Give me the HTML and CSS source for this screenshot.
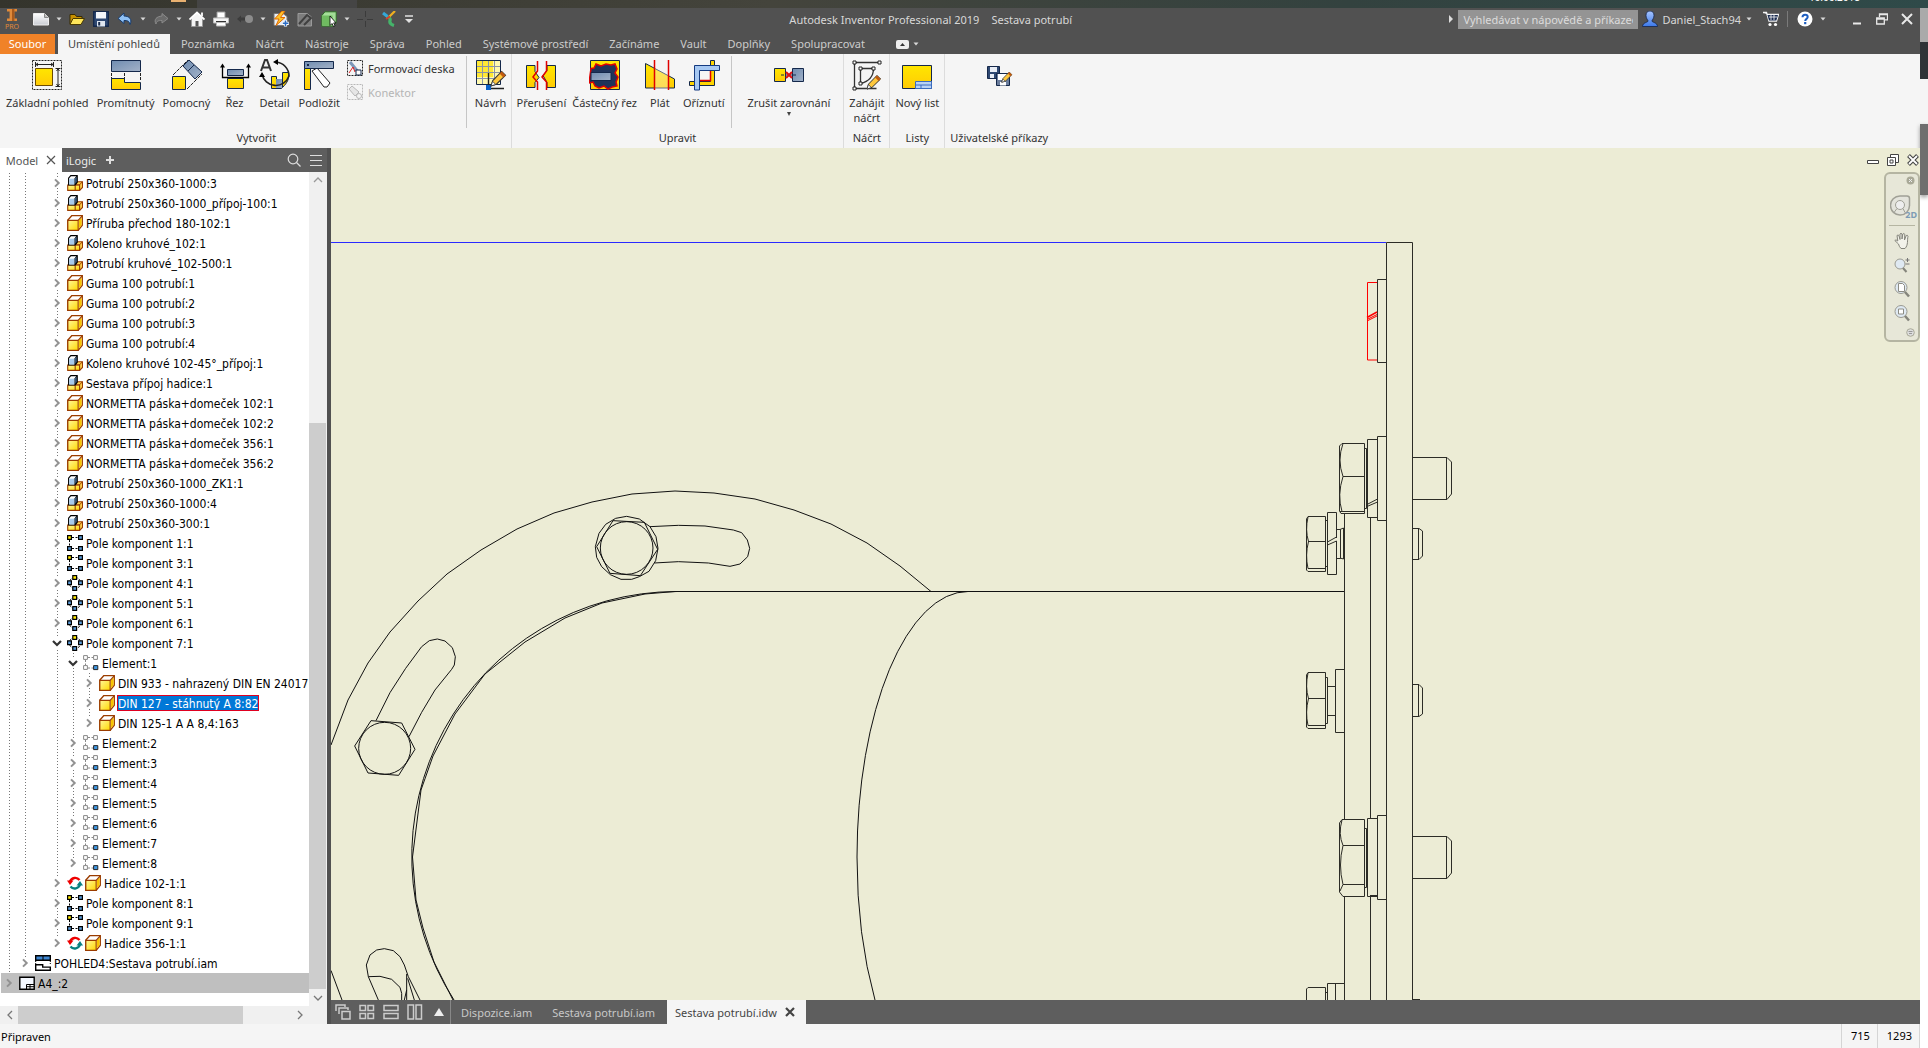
FILE: index.html
```html
<!DOCTYPE html>
<html lang="cs">
<head>
<meta charset="utf-8">
<title>Autodesk Inventor Professional 2019 – Sestava potrubí</title>
<link rel="stylesheet" href="styles.css">
</head>
<body>
<svg class="defs" aria-hidden="true">
  <defs>
    <linearGradient id="gold" x1="0" y1="0" x2="0" y2="1"><stop offset="0" stop-color="#ffe600"/><stop offset="1" stop-color="#ffcb05"/></linearGradient>
    <linearGradient id="steel" x1="0" y1="0" x2="1" y2="1"><stop offset="0" stop-color="#6f8cb0"/><stop offset="1" stop-color="#a3b2c8"/></linearGradient>
    <linearGradient id="paper" x1="0" y1="0" x2="0" y2="1"><stop offset="0" stop-color="#ffffff"/><stop offset="1" stop-color="#c9ccd3"/></linearGradient>
    <linearGradient id="partface" x1="0" y1="0" x2="1" y2="1"><stop offset="0" stop-color="#fff79a"/><stop offset="1" stop-color="#ffd800"/></linearGradient>
    <linearGradient id="user" x1="0" y1="0" x2="0" y2="1"><stop offset="0" stop-color="#a8c6ff"/><stop offset="1" stop-color="#3b78e8"/></linearGradient>
    <symbol id="part" viewBox="0 0 16 16"><path d="M.7 5.300 4.700.7h10.600v9.500l-4.100 5.100H.7z" fill="#fff" stroke="#9a3c00" stroke-width="1.300"/><path d="M.8 5.300h10.400v10H.8z" fill="url(#partface)" stroke="#9a3c00" stroke-width="1.200"/><path d="M11.800 5.500 14.700 2v7.900l-2.900 3.600z" fill="#f8c400"/><path d="m11.200 5.300 4-4.500" stroke="#9a3c00" stroke-width="1.200"/></symbol>
    <symbol id="asm" viewBox="0 0 16 16"><path d="M.7 10h7.500v5.400H.7zM8.200 10h4.400v5.400H8.200z" fill="url(#partface)" stroke="#9a3c00" stroke-width="1.100"/><path d="m8.200 9.800 2.300-3h5v5.700l-2.900 2.900V9.800z" fill="#ffd34d" stroke="#9a3c00" stroke-width="1.100"/><path d="m12.600 9.800 2.600-2.800" stroke="#9a3c00"/><path d="M1.600 3.200 3.800.6h6.400v6.600L8 10H1.600z" fill="#fff" stroke="#000" stroke-width="1.100"/><path d="M2.200 3.700h5.200v5.700H2.200z" fill="#a9cbec"/><path d="M7.900 9.600V3.400l2-2.500v6z" fill="#4d7cb0" stroke="#000" stroke-width=".8"/></symbol>
    <symbol id="rect" viewBox="0 0 16 16"><path d="M5 2.500h7M2.500 5v7M5 13.500h7" stroke="#000" stroke-dasharray="2 1.500"/><path d="M.6.6h3.800v3.800H.6z" fill="#ffe800" stroke="#000" stroke-width="1.200"/><path d="M11.600.6h3.800v3.800h-3.800zM.6 11.600h3.800v3.800H.6zM11.600 11.600h3.800v3.800h-3.800z" fill="#5b9bd8" stroke="#000" stroke-width="1.200"/></symbol>
    <symbol id="circ" viewBox="0 0 16 16"><circle cx="8" cy="8" r="5.600" fill="none" stroke="#000" stroke-dasharray="2 1.300"/><path d="M5.800.6h3.800v3.800H5.800z" fill="#ffe800" stroke="#000" stroke-width="1.200"/><path d="M.6 5.800h3.800v3.800H.6zM11.600 5.800h3.800v3.800h-3.800zM5.800 11.600h3.800v3.800H5.800z" fill="#5b9bd8" stroke="#000" stroke-width="1.200"/></symbol>
    <symbol id="elem" viewBox="0 0 16 16"><path d="M5 2.500h6M2.500 5v6M5 13h6" stroke="#888" stroke-dasharray="2 1.500"/><path d="M.6.6h3.800v3.800H.6zM10.600.6h3.800v3.800h-3.800zM.6 10.600h3.800v3.800H.6z" fill="#fff" stroke="#888"/><path d="M10.600 10.600h4.200v4h-4.200z" fill="#3f95e0" stroke="#222"/></symbol>
    <symbol id="flex" viewBox="0 0 16 16"><path d="M3 6.500A5.500 5.500 0 0 1 12.500 5" fill="none" stroke="#e00" stroke-width="2.400"/><path d="M0 5.500h6.500L3 10z" fill="#e00"/><path d="M13 9.500A5.500 5.500 0 0 1 3.500 11.500" fill="none" stroke="#088080" stroke-width="2.400"/><path d="M9.500 10.500H16L13 6z" fill="#088080"/></symbol>
    <symbol id="view" viewBox="0 0 16 16"><path d="M.7.7h14.600v4.600H.7z" fill="#3f86d0" stroke="#000" stroke-width="1.400"/><path d="M8 1v4" stroke="#000"/><path d="M.7 6v4M15.300 6v4" stroke="#000" stroke-dasharray="1 1"/><path d="M.7 9.700h7v2.400h7.600v3.200H.7z" fill="#fff" stroke="#000" stroke-width="1.400"/></symbol>
    <symbol id="sheet" viewBox="0 0 16 16"><path d="M.8 2.300h14.400v11.900H.8z" fill="#f4f8ff" stroke="#000" stroke-width="1.400"/><path d="M7.500 9.500h7.500v4.500H7.500zM7.500 11.700h7.500M11 9.500v4.500" fill="#fff" stroke="#000"/></symbol>
    <symbol id="chev" viewBox="0 3 16 10"><path d="m6 4.400 3.700 3.600L6 11.600" fill="none" stroke="#929292" stroke-width="2"/></symbol>
    <symbol id="chevd" viewBox="0 3 16 10"><path d="m4 6 4 4 4-4" fill="none" stroke="#333" stroke-width="2.200"/></symbol>
    <symbol id="drop" viewBox="0 0 8 8"><path d="M1.500 2.500h5L4 5.500z" fill="#d8d8d8"/></symbol>
    <symbol id="pencil" viewBox="0 0 16 16"><path d="m1 15 1.600-5L11 1.400 14.600 5 6 13.400z" fill="#ffc83c" stroke="#333" stroke-width="1"/><path d="M11 1.400 14.600 5l-2 2L9 3.400z" fill="#c05a10"/><path d="m1 15 1.400-4.400 3 3z" fill="#fff" stroke="#333" stroke-width=".8"/></symbol>
  </defs>
</svg>

<div class="desktop"><i class="task-mark"></i><i class="task-pane"></i><time class="clock">10.06.2018</time></div>
<div class="screen">
<div class="app">
  <header class="titlebar">
    <div class="qat">
      <button class="logo" aria-label="Inventor"><svg width="16" height="18" viewBox="0 0 16 18"><path d="M3 1h10v2.600h-2.600v7H13V13H3v-2.400h2.600v-7H3z" fill="#e08a3a"/><path d="M8 1h2.400v12H8z" fill="#a85a1c"/></svg><span>PRO</span></button>
      <button aria-label="Nový"><svg width="16" height="16"><path d="M.5 2.500h11l4 4v7.500H.5z" fill="url(#paper)" stroke="#eee"/><path d="M11.500 2.500v4h4" fill="#bbb" stroke="#888"/></svg></button>
      <button class="dd" aria-label="Možnosti nového"><svg width="8" height="8"><use href="#drop"/></svg></button>
      <button aria-label="Otevřít"><svg width="16" height="16"><path d="M1 13V3.500h5l1.500 2H13V8" fill="#c79000" stroke="#3a2c00"/><path d="M1 13.500 4 7.500h11.500l-3.500 6z" fill="#ffe65a" stroke="#4a3a00"/></svg></button>
      <button aria-label="Uložit"><svg width="16" height="16"><path d="M.7.7h14.600v14.600H.7z" fill="#2e4872" stroke="#15284a" stroke-width="1.400"/><path d="M3 1h10v6.500H3z" fill="#f4f6fa"/><path d="M4 10h8v5.500H4z" fill="#dfe6f0"/><path d="M5.200 11h2v3.500h-2z" fill="#15284a"/></svg></button>
      <button aria-label="Zpět"><svg width="16" height="16"><path d="M7 2 1 7.500l6 5v-3c4-.2 5.500 1 6 4 2.500-5-.5-8.500-6-8.500z" fill="#8fc1f5" stroke="#163a6c"/></svg></button>
      <button class="dd" aria-label="Historie zpět"><svg width="8" height="8"><use href="#drop"/></svg></button>
      <button aria-label="Znovu"><svg width="16" height="16"><path d="M9 2.500 15 7.500 9 12V9.500C5 9.300 3.500 10.500 3 13 .5 8.500 3.500 5.500 9 5z" fill="#6b6b6b" stroke="#8a8a8a"/></svg></button>
      <button class="dd" aria-label="Historie znovu"><svg width="8" height="8"><use href="#drop"/></svg></button>
      <button aria-label="Domů"><svg width="16" height="16"><path d="M2.500 7v8.500h11V7L8 2z" fill="#f4f4f4" stroke="#999"/><path d="M.5 8.500 8 1.500l7.500 7" fill="none" stroke="#fff" stroke-width="1.800"/><path d="M6.500 10h3v5.500h-3z" fill="#555"/><path d="M12 1.500h2V5h-2z" fill="#eee"/></svg></button>
      <button aria-label="Tisk"><svg width="16" height="16"><path d="M4 1h8v6H4z" fill="#fff" stroke="#999"/><path d="M.5 7h15v5H.5z" fill="#f4f4f4" stroke="#bbb"/><path d="M3 10h10v1.500H3z" fill="#333"/><path d="M3.500 11.500h9V15h-9z" fill="#fff" stroke="#bbb"/></svg></button>
      <button aria-label="Návrat"><svg width="16" height="16"><path d="m0 8 4-3.500v2h4v3H4v2z" fill="#3c3c3c"/><circle cx="12" cy="8" r="4" fill="#8c8c8c"/></svg></button>
      <button class="dd" aria-label="Možnosti návratu"><svg width="8" height="8"><use href="#drop"/></svg></button>
      <button aria-label="Aktualizovat"><svg width="16" height="16"><path d="M1 2.500h9l4 3v9H1z" fill="#e9eef4" stroke="#777"/><path d="M9 0 1.500 8H6l-3 6.500L12 6.500H7.500L12 0z" fill="#ffc42a" stroke="#e06a00"/><path d="M12.500 9v6.500M9.300 12.300h6.500" stroke="#fff" stroke-width="3.200"/><path d="M12.500 9.500V15M9.800 12.300h5.500" stroke="#2b6cc4" stroke-width="1.600"/></svg></button>
      <button aria-label="Odložit"><svg width="16" height="16"><path d="M1 2.500h9l4.500 3.500v9H1z" fill="#7d7d7d" stroke="#9a9a9a"/><path d="m2 13 8-9 4 3-7 7" fill="none" stroke="#404040" stroke-width="2"/></svg></button>
      <button aria-label="Vybrat"><svg width="16" height="16"><path d="M.8 4.500 4 .8h11.200v10.700L12 15.200H.8z" fill="#a4dd98" stroke="#2f6b28"/><path d="M1.300 4.500h10.200v10.200H1.300z" fill="#6fbb60"/><path d="M9 5v9.500l2-2 1.500 3 1.500-.8-1.300-2.800H15z" fill="#fff" stroke="#000" stroke-width=".8"/></svg></button>
      <button class="dd" aria-label="Filtr výběru"><svg width="8" height="8"><use href="#drop"/></svg></button>
      <button aria-label="Středový kříž"><svg width="16" height="16"><path d="M8.500 0v6M8.500 10v6M0 8.500h6M10 8.500h6" stroke="#3b3b3b"/></svg></button>
      <button aria-label="Vzhled"><svg width="16" height="16"><path d="M5 6.500q5-.5 4 3t4 5" fill="none" stroke="#45b36a" stroke-width="3.200"/><path d="m2 2 4.500 3.500" stroke="#35a8d8" stroke-width="3"/><path d="m14 0-6 6" stroke="#f0b020" stroke-width="2.200"/><path d="m5 8 4-2.500" stroke="#d83a2a" stroke-width="2"/></svg></button>
      <button class="dd" aria-label="Přizpůsobit"><svg width="10" height="10"><path d="M1 2h8" stroke="#e0e0e0" stroke-width="1.500"/><path d="M1 5h8L5 9z" fill="#e0e0e0"/></svg></button>
    </div>
    <div class="title"><span>Autodesk Inventor Professional 2019</span><span>Sestava potrubí</span></div>
    <div class="account">
      <svg width="6" height="10"><path d="M1 1v8l4-4z" fill="#ddd"/></svg>
      <input class="search" type="text" aria-label="Vyhledávání" placeholder="Vyhledávat v nápovědě a příkazech">
      <button class="user"><svg width="16" height="16"><path d="M8 0c3 0 4 2.200 4 4.500S10.500 9 9.800 10c.5 1.500 5.700 1.500 5.700 5.500H.5C.5 11.500 5.700 11.500 6.200 10 5.500 9 4 7 4 4.500S5 0 8 0z" fill="url(#user)" stroke="#14244a" stroke-width=".8"/></svg>Daniel_Stach94<svg width="8" height="8"><use href="#drop"/></svg></button>
      <button class="cart" aria-label="Obchod"><svg width="16" height="16"><path d="M0 1.500h3.500L6 10h7.500l2-6.500H4.500" fill="#dfe6f2" stroke="#f4f4f4" stroke-width="1.300"/><path d="M4.500 4h10.500l-1.700 5.500H6z" fill="#1b2c50"/><path d="M6 6h8M8 4v5M11 4v5" stroke="#fff" stroke-width=".8"/><circle cx="7" cy="13.500" r="1.600" fill="#fff"/><circle cx="12.500" cy="13.500" r="1.600" fill="#fff"/></svg></button>
      <button class="help" aria-label="Nápověda"><svg width="16" height="16"><circle cx="8" cy="8" r="7.500" fill="#fff"/><path d="M5.500 6.200c0-3.400 5.200-3.200 5.200-.2 0 1.900-2.500 1.900-2.500 4" fill="none" stroke="#1f5fc0" stroke-width="2"/><path d="M7.100 11h2.200v2.200H7.100z" fill="#1f5fc0"/></svg><svg width="8" height="8"><use href="#drop"/></svg></button>
      <div class="winbtns">
        <button aria-label="Minimalizovat"><svg width="12" height="12"><path d="M2 10.500h8" stroke="#e8e8e8" stroke-width="2"/></svg></button>
        <button aria-label="Obnovit"><svg width="12" height="12"><path d="M3.500 4V.8h8v6h-3M3.500 1.500h8" fill="none" stroke="#e8e8e8" stroke-width="1.300"/><path d="M.7 5h7.600v6H.7zM.7 6h7.600" fill="none" stroke="#e8e8e8" stroke-width="1.300"/></svg></button>
        <button aria-label="Zavřít"><svg width="12" height="12"><path d="m1 1 10 10M11 1 1 11" stroke="#e8e8e8" stroke-width="2"/></svg></button>
      </div>
    </div>
  </header>

  <nav class="tabs">
    <button class="file">Soubor</button>
    <button class="active">Umístění pohledů</button>
    <button>Poznámka</button><button>Náčrt</button><button>Nástroje</button><button>Správa</button><button>Pohled</button><button>Systémové prostředí</button><button>Začínáme</button><button>Vault</button><button>Doplňky</button><button>Spolupracovat</button>
    <button class="collapse" aria-label="Sbalit pás karet"><svg width="13" height="9"><rect width="13" height="9" rx="2" fill="#eee"/><path d="M4 6h5L6.500 3z" fill="#333"/></svg><svg width="8" height="8"><use href="#drop"/></svg></button>
  </nav>

  <section class="ribbon">
    <div class="panel create">
      <div class="tools">
        <button><svg width="32" height="32"><path d="M1.500 1.500h29v29h-29z" fill="none" stroke="#222" stroke-dasharray="2 1"/><path d="M4.500 9.500h17v17h-17z" fill="url(#gold)" stroke="#6b4a00"/><path d="M5 5.500h17M4.500 3v5M22.500 3v5M7 4 5 5.500 7 7M20 4l2 1.500L20 7M27 10v17M24.500 9.500h5M24.500 27.500h5M25.500 12l1.500-2 1.500 2M25.500 25l1.500 2 1.500-2" fill="none" stroke="#222"/></svg>Základní pohled</button>
        <button><svg width="32" height="32"><path d="M1.500 1.500h29v11h-29z" fill="url(#steel)" stroke="#14284b"/><path d="M1.500 14v6M14.500 14v8M30.500 14v8" stroke="#222" stroke-dasharray="3 1"/><path d="M1.500 19.500h13v4h16v7h-29z" fill="url(#gold)" stroke="#14284b"/></svg>Promítnutý</button>
        <button><svg width="32" height="32"><path d="M2 16 17 1M16 30l15-15" stroke="#222" stroke-dasharray="4 1"/><path d="m12 7 6-6 13 12-7 7z" fill="url(#steel)" stroke="#14284b"/><path d="m17 12 6-6" stroke="#14284b"/><path d="M1.500 17.500h13v13h-13z" fill="url(#gold)" stroke="#14284b"/></svg>Pomocný</button>
        <button><svg width="32" height="32"><path d="M8.500 10.500h16v6h-16z" fill="url(#steel)" stroke="#14284b"/><path d="M8.500 19.500h16v10h-16z" fill="url(#gold)" stroke="#14284b"/><path d="M3.500 7v11.500h26V7" fill="none" stroke="#000" stroke-width="1.300"/><path d="m1 8.500 2.500-4L6 8.500zM27 8.500l2.500-4 2.500 4z"/></svg>Řez</button>
        <button><svg width="32" height="32"><path d="M12.500 17.500h5v3h5v9h-10z" fill="url(#gold)" stroke="#14284b"/><path d="M17 20h7v9h-7z" fill="url(#steel)"/><path d="M23.500 13.500h6c1 6-1 10-6 15z" fill="url(#gold)" stroke="#14284b"/><path d="M3 15a14 14 0 0 0 27 2A14 14 0 0 0 17 3" fill="none" stroke="#222" stroke-width="1.600"/><path d="m14 3 5-3v6zM0 18l3-5 3 5z"/><path d="m2 12 4-11h2l4 11M4 8.500h6" fill="none" stroke="#333" stroke-width="2"/></svg>Detail</button>
        <button><svg width="32" height="32"><path d="m9 12 5-3 13 15-3 4h-3z" fill="#fff" stroke="#222"/><path d="M1.500 9.500h6v21h-6z" fill="url(#gold)" stroke="#14284b"/><path d="M1.500 2.500h29v7h-29z" fill="url(#steel)" stroke="#14284b"/><path d="M4 5h2v2H4z" fill="#14284b"/></svg>Podložit</button>
        <div class="small">
          <button><svg width="16" height="16"><path d="M.5.5h15v15H.5z" fill="none" stroke="#222" stroke-dasharray="2 1"/><path d="m3 2 9 11" stroke="#7d97b8" stroke-width="3"/><path d="m2 13 4-6 2 5" fill="none" stroke="#d22"/><path d="M9 10h5v5H9z" fill="#fff" stroke="#14284b"/></svg>Formovací deska</button>
          <button disabled><svg width="16" height="16"><path d="M.5.5h15v15H.5z" fill="none" stroke="#b8b8b8" stroke-dasharray="2 1"/><path d="m2 5 3-3 7 6-4 4z" fill="#e6e6e6" stroke="#b8b8b8"/><circle cx="12" cy="12" r="2.500" fill="#f5f5f5" stroke="#b8b8b8"/></svg>Konektor</button>
        </div>
        <i class="rule"></i>
        <button><svg width="32" height="32"><path d="M1.500 1.500h24v24h-24z" fill="#fff9b0" stroke="#14284b"/><path d="M2 2h16v16H2z" fill="#ffe835"/><path d="M2 7.500h23M2 13.500h23M2 19.500h23M7.500 2v23M13.500 2v23M19.500 2v23" stroke="#8a94a6"/><path d="M13.500 14v13M15 29.500h14" stroke="#222" stroke-width="1.400"/><path d="M11 26h5v5h-5z" fill="#0a62c8"/><svg x="15" y="11" width="17" height="17"><use href="#pencil"/></svg></svg>Návrh</button>
      </div>
      <h2>Vytvořit</h2>
    </div>
    <div class="panel">
      <div class="tools">
        <button><svg width="32" height="32"><path d="M1.500 6.500H10v6l4 6-4 5v5H1.500zM30.500 6.500H22v5l-4 5 4 7v5h8.500z" fill="url(#gold)" stroke="#14284b"/><path d="M12.500 2v10L8 18l4.500 5v8M21.500 2v10L17 18l4.500 5v8" fill="none" stroke="#e00000" stroke-width="1.500"/></svg>Přerušení</button>
        <button><svg width="32" height="32"><path d="M1.500 1.500h29v29h-29z" fill="url(#gold)" stroke="#14284b"/><path d="M2 9.500 5 9l2-4 5 2 5-2 5 1 4-1 2 5-2 4 3 4-2 5 1 4-5 1-4 2-4-3-5 2-4-2-2-4-4 1z" fill="#1f3359" stroke="#e00000" stroke-width="1.500"/><path d="M2 13.500h20v8H2z" fill="url(#steel)" stroke="#14284b"/></svg>Částečný řez</button>
        <button><svg width="32" height="32"><path d="M1.500 4.500 30.500 20v9h-29z" fill="url(#gold)" stroke="#14284b"/><path d="M11 5h13v25H11z" fill="#f5f5f5" opacity=".35"/><path d="M10.500 1v30M24.500 1v30" stroke="#e00000" stroke-width="1.500"/></svg>Plát</button>
        <button><svg width="32" height="32"><path d="M22.500 1.500h4v25h-25v-4h21z" fill="#ffd500" stroke="#14284b"/><path d="M10 21.500h12.500V10" fill="none" stroke="#e00000" stroke-width="1.500"/><path d="M6.500 31V6.500h25v5h-20V31z" fill="#a6c8f2" stroke="#143a80"/></svg>Oříznutí</button>
        <i class="rule"></i>
        <button class="wide"><svg width="32" height="32"><path d="M1.500 9.500h11v13h-11z" fill="url(#gold)" stroke="#14284b"/><path d="M19.500 9.500h11v13h-11z" fill="url(#steel)" stroke="#14284b"/><path d="M8 16h16" stroke="#14284b" stroke-dasharray="3 1"/><path d="m13 13 6 6M19 13l-6 6" stroke="#d11" stroke-width="2"/></svg>Zrušit zarovnání<svg width="8" height="8"><path d="M2 2h4L4 6z" fill="#444"/></svg></button>
      </div>
      <h2>Upravit</h2>
    </div>
    <div class="panel">
      <div class="tools">
        <button><svg width="32" height="32"><path d="M3.500 3.500h25M3.500 3.500v26h22M9.500 9.500h13c0 8-5 13-13 15z" fill="none" stroke="#333" stroke-width="1.300"/><path d="M2 2h3v3H2zM27 2h3v3h-3zM2 28h3v3H2zM8 8h3v3H8zM21 8h3v3h-3zM8 23h3v3H8z" fill="#fff" stroke="#222"/><svg x="15" y="15" width="16" height="16"><use href="#pencil"/></svg></svg>Zahájit<br>náčrt</button>
      </div>
      <h2>Náčrt</h2>
    </div>
    <div class="panel">
      <div class="tools">
        <button><svg width="32" height="32"><path d="M1.500 6.500h29v23h-29z" fill="url(#gold)" stroke="#14284b"/><path d="M14.500 22.500h16v7h-16zM14.500 26h16M20 26v3.500" fill="#b9d2f4" stroke="#3a6cc0"/></svg>Nový list</button>
      </div>
      <h2>Listy</h2>
    </div>
    <div class="panel last">
      <div class="tools">
        <button aria-label="Uložit kopii"><svg width="32" height="32"><path d="M4.500 7.500h12v12h-12z" fill="#2e4872" stroke="#15284a"/><path d="M7 8h7v5H7zM7 15h4v4H7z" fill="#e8edf5"/><path d="M13.500 14.500h13v12h-13z" fill="#6b7d9c" stroke="#15284a"/><path d="M15 15h9v6h-9zM17 23h6v3.500h-6z" fill="#fff"/><svg x="18" y="12" width="12" height="12"><use href="#pencil"/></svg></svg></button>
      </div>
      <h2>Uživatelské příkazy</h2>
    </div>
  </section>

  <div class="work">
    <aside class="browser">
      <div class="bhead">
        <button class="model">Model <svg width="10" height="10"><path d="m1 1 8 8M9 1 1 9" stroke="#555" stroke-width="1.200"/></svg></button>
        <button class="ilogic">iLogic</button>
        <button aria-label="Přidat"><svg width="10" height="10"><path d="M5 1v8M1 5h8" stroke="#ddd" stroke-width="2"/></svg></button>
        <span class="grow"></span>
        <button aria-label="Hledat"><svg width="14" height="14"><circle cx="6" cy="6" r="4.800" fill="none" stroke="#ddd" stroke-width="1.200"/><path d="m9.500 9.500 4 4" stroke="#ddd" stroke-width="1.200"/></svg></button>
        <button aria-label="Nabídka"><svg width="14" height="14"><path d="M1 2.500h12M1 7.500h12M1 12.500h12" stroke="#ddd" stroke-width="1.200"/></svg></button>
      </div>
      <div class="treewrap">
        <div class="treeview">
        <ul class="tree lined">
          <li><ul class="lined">
            <li><ul class="skip"><li><ul class="lined">
              <li><p><svg><use href="#chev"/></svg><svg><use href="#asm"/></svg><span>Potrubí 250x360-1000:3</span></p></li>
              <li><p><svg><use href="#chev"/></svg><svg><use href="#asm"/></svg><span>Potrubí 250x360-1000_přípoj-100:1</span></p></li>
              <li><p><svg><use href="#chev"/></svg><svg><use href="#part"/></svg><span>Příruba přechod 180-102:1</span></p></li>
              <li><p><svg><use href="#chev"/></svg><svg><use href="#asm"/></svg><span>Koleno kruhové_102:1</span></p></li>
              <li><p><svg><use href="#chev"/></svg><svg><use href="#asm"/></svg><span>Potrubí kruhové_102-500:1</span></p></li>
              <li><p><svg><use href="#chev"/></svg><svg><use href="#part"/></svg><span>Guma 100 potrubí:1</span></p></li>
              <li><p><svg><use href="#chev"/></svg><svg><use href="#part"/></svg><span>Guma 100 potrubí:2</span></p></li>
              <li><p><svg><use href="#chev"/></svg><svg><use href="#part"/></svg><span>Guma 100 potrubí:3</span></p></li>
              <li><p><svg><use href="#chev"/></svg><svg><use href="#part"/></svg><span>Guma 100 potrubí:4</span></p></li>
              <li><p><svg><use href="#chev"/></svg><svg><use href="#asm"/></svg><span>Koleno kruhové 102-45°_přípoj:1</span></p></li>
              <li><p><svg><use href="#chev"/></svg><svg><use href="#asm"/></svg><span>Sestava přípoj hadice:1</span></p></li>
              <li><p><svg><use href="#chev"/></svg><svg><use href="#part"/></svg><span>NORMETTA páska+domeček 102:1</span></p></li>
              <li><p><svg><use href="#chev"/></svg><svg><use href="#part"/></svg><span>NORMETTA páska+domeček 102:2</span></p></li>
              <li><p><svg><use href="#chev"/></svg><svg><use href="#part"/></svg><span>NORMETTA páska+domeček 356:1</span></p></li>
              <li><p><svg><use href="#chev"/></svg><svg><use href="#part"/></svg><span>NORMETTA páska+domeček 356:2</span></p></li>
              <li><p><svg><use href="#chev"/></svg><svg><use href="#asm"/></svg><span>Potrubí 250x360-1000_ZK1:1</span></p></li>
              <li><p><svg><use href="#chev"/></svg><svg><use href="#asm"/></svg><span>Potrubí 250x360-1000:4</span></p></li>
              <li><p><svg><use href="#chev"/></svg><svg><use href="#asm"/></svg><span>Potrubí 250x360-300:1</span></p></li>
              <li><p><svg><use href="#chev"/></svg><svg><use href="#rect"/></svg><span>Pole komponent 1:1</span></p></li>
              <li><p><svg><use href="#chev"/></svg><svg><use href="#rect"/></svg><span>Pole komponent 3:1</span></p></li>
              <li><p><svg><use href="#chev"/></svg><svg><use href="#circ"/></svg><span>Pole komponent 4:1</span></p></li>
              <li><p><svg><use href="#chev"/></svg><svg><use href="#circ"/></svg><span>Pole komponent 5:1</span></p></li>
              <li><p><svg><use href="#chev"/></svg><svg><use href="#circ"/></svg><span>Pole komponent 6:1</span></p></li>
              <li><p><svg><use href="#chevd"/></svg><svg><use href="#circ"/></svg><span>Pole komponent 7:1</span></p>
                <ul class="lined">
                  <li><p><svg><use href="#chevd"/></svg><svg><use href="#elem"/></svg><span>Element:1</span></p>
                    <ul class="lined">
                      <li><p><svg><use href="#chev"/></svg><svg><use href="#part"/></svg><span>DIN 933 - nahrazený DIN EN 24017</span></p></li>
                      <li><p class="picked"><svg><use href="#chev"/></svg><svg><use href="#part"/></svg><span>DIN 127 - stáhnutý A 8:82</span></p></li>
                      <li><p><svg><use href="#chev"/></svg><svg><use href="#part"/></svg><span>DIN 125-1 A A 8,4:163</span></p></li>
                    </ul>
                  </li>
                  <li><p><svg><use href="#chev"/></svg><svg><use href="#elem"/></svg><span>Element:2</span></p></li>
                  <li><p><svg><use href="#chev"/></svg><svg><use href="#elem"/></svg><span>Element:3</span></p></li>
                  <li><p><svg><use href="#chev"/></svg><svg><use href="#elem"/></svg><span>Element:4</span></p></li>
                  <li><p><svg><use href="#chev"/></svg><svg><use href="#elem"/></svg><span>Element:5</span></p></li>
                  <li><p><svg><use href="#chev"/></svg><svg><use href="#elem"/></svg><span>Element:6</span></p></li>
                  <li><p><svg><use href="#chev"/></svg><svg><use href="#elem"/></svg><span>Element:7</span></p></li>
                  <li><p><svg><use href="#chev"/></svg><svg><use href="#elem"/></svg><span>Element:8</span></p></li>
                </ul>
              </li>
              <li><p><svg><use href="#chev"/></svg><svg><use href="#flex"/></svg><svg><use href="#part"/></svg><span>Hadice 102-1:1</span></p></li>
              <li><p><svg><use href="#chev"/></svg><svg><use href="#rect"/></svg><span>Pole komponent 8:1</span></p></li>
              <li><p><svg><use href="#chev"/></svg><svg><use href="#rect"/></svg><span>Pole komponent 9:1</span></p></li>
              <li><p><svg><use href="#chev"/></svg><svg><use href="#flex"/></svg><svg><use href="#part"/></svg><span>Hadice 356-1:1</span></p></li>
            </ul></li></ul></li>
            <li><p><svg><use href="#chev"/></svg><svg><use href="#view"/></svg><span>POHLED4:Sestava potrubí.iam</span></p></li>
          </ul></li>
          <li><p class="current"><svg><use href="#chev"/></svg><svg><use href="#sheet"/></svg><span>A4_:2</span></p></li>
        </ul>
        </div>
        <div class="vbar"><svg width="17" height="17"><path d="m5 10 4-4 4 4" fill="none" stroke="#999" stroke-width="1.300"/></svg><i class="track"></i><i class="thumb"></i><svg width="17" height="17"><path d="m5 7 4 4 4-4" fill="none" stroke="#777" stroke-width="1.300"/></svg></div>
      </div>
      <div class="hbar"><svg width="17" height="17"><path d="M11 5 7 9l4 4" fill="none" stroke="#777" stroke-width="1.300"/></svg><i class="thumb"></i><i class="track"></i><svg width="17" height="17"><path d="m6 5 4 4-4 4" fill="none" stroke="#777" stroke-width="1.300"/></svg><i class="corner"></i></div>
    </aside>

    <main class="doc">
      <div class="canvas">
        <svg class="drawing" aria-label="Výkres sestavy potrubí">
          <g transform="translate(-331 -148)" fill="none" stroke="#111">
            <path d="M331 242.500H1386" stroke="#2a2aff"/>
            <path d="M331 745 348 700 368 663 390 632 418 601 447 574 481 550 517 529 554 513 592 502 632 494 675 491 714 493 755 499 794 510 831 524 867 543 900 566 931 591.500M331 970.500 342 1000"/>
            <path d="M454 1000A265 265 0 0 1 677 591.500M700 591.500H675L645 594 602 603 565 618 525 642 485 674 455 714 433 756 421 790 412.500 857 416 900 423 928 434 962 453 1000"/>
            <path d="M677 591.500H1344M968 591.500A111 265.500 0 0 0 857 857Q857 935 875 1000"/>
            <g transform="translate(325 470) scale(.33333)" stroke-width="3">
              <path d="M905 139 943 147 975 170 993 200 999 235 992 272 972 304 943 320 920 328H888L856 314 830 290 815 262 811 230 822 190 842 163 872 145Z"/>
              <circle cx="905" cy="234" r="79"/>
              <path d="M864 152 958 157 998 238 946 317 855 310 815 230Z"/>
              <path d="M975 170 1060 166 1140 168 1225 180 1250 188 1267 210 1274 235 1268 260 1245 282 1215 289 1150 279 1060 275 988 279"/>
              <circle cx="179" cy="835" r="78"/>
              <path d="M138 752 230 759 270 838 221 916 129 909 89 828Z"/>
              <path d="M153 752 195 668 242 595 290 530 313 512 337 507 360 513 382 533 391 560 388 585 380 598 330 660 290 727 252 800"/>
            </g>
            <g transform="translate(325 900) scale(.33333)" stroke-width="3">
              <path d="M160 300 130 230 124 195 135 165 155 150 178 146 205 152 225 170 238 195 250 230 285 300M130 230 165 229 200 238 225 262 230 280V300M245 222V300M248 235 268 300M245 270 238 300"/>
            </g>
            <g stroke="#2c2c26">
              <path d="M1386.500 1000V242.500H1412.500V1000M1344.500 513V820M1344.500 896V1000M1370.500 517V819M1370.500 897V1000"/>
              <path d="M1386 279.500H1377.500V362.500H1386M1386 436.500H1377.500V520.500H1386M1377 439.500H1367.500V517.500H1377M1367 504.500 1377.500 499M1367 506.500 1377.500 502"/>
              <path d="M1412 457.500H1447L1451.500 462V494L1447 499.500H1412M1446.500 458V499"/>
              <path d="M1364.500 443.500H1342L1339.500 446V511L1341 513.500H1364.500ZM1343 476.500H1364M1343 443.500Q1337 460 1343 476.500Q1337 495 1342 511.500M1340 511.500H1364M1364 448.500H1366.500V508.500H1364"/>
              <path d="M1325.500 516.500H1308L1306.500 519V570L1308 571.500H1325.500ZM1308 541.500H1325M1308 517Q1305 530 1308.500 541.500Q1305 555 1308 568.500H1325M1325 520.500H1327.500V566.500H1325"/>
              <path d="M1336.500 538V512.500H1327.500V574.500H1336.500V541M1327.500 542 1336.500 537M1327.500 545 1336.500 541M1336 529.500H1340.500V558.500H1336M1340 529.500 1343.500 528V559L1340 558"/>
              <path d="M1412 528.500H1419L1422.500 531V556L1419 559.500H1412M1418.500 528V559M1412 684.500H1419L1422.500 688V714L1419 716.500H1412M1418.500 685V716"/>
              <path d="M1325.500 672.500H1308L1306.500 675V727L1308 728.500H1325.500ZM1308 698.500H1325M1308 673Q1305 687 1308.500 698.500Q1305 712 1308 725.500H1325M1325 677.500H1327.500V723.500H1325M1327 686.500H1335M1327 715.500H1335M1344 669.500H1335.500V732.500H1344"/>
              <path d="M1364.500 819.500H1342L1339.500 823V892L1343 896.500H1364.500ZM1343 845.500H1364M1343 884.500H1364M1342 820Q1338 834 1343 845.500Q1338 865 1343 884.500L1340 891M1364 828.500H1366.500V887.500H1364"/>
              <path d="M1386 815.500H1377.500V899.500H1386M1377 818.500H1367.500V896.500H1377M1370 895.500H1377"/>
              <path d="M1412 836.500H1447L1451.500 841V873L1447 878.500H1412M1446.500 837V878"/>
              <path d="M1306.500 1000V989L1308 987.500H1325.500V1000M1327.500 1000V983.500H1344M1335.500 984V1000M1325 992.500H1327M1412 999.500H1420"/>
            </g>
            <path d="M1377 282.500H1367.500V360H1377M1367 319.500 1377 314.500M1367 321 1377 316" stroke="#f00"/>
            <path d="M1367 317.500 1377 312" stroke="#f00" stroke-width="1.500"/>
          </g>
        </svg>
        <div class="mdi">
          <button aria-label="Minimalizovat výkres"><svg width="12" height="12"><path d="M.5 6.500h11v3H.5z" fill="#fff" stroke="#444"/></svg></button>
          <button aria-label="Obnovit výkres"><svg width="12" height="12"><path d="M3.500 3V.5h8v8H9" fill="#fff" stroke="#444"/><path d="M.5 3.500h8v8h-8z" fill="#fff" stroke="#444"/><path d="M3 6h3v3H3z" fill="none" stroke="#444"/></svg></button>
          <button aria-label="Zavřít výkres"><svg width="12" height="12"><path d="m1.500 1.500 9 9M10.500 1.500l-9 9" stroke="#444" stroke-width="4"/><path d="m2 2 8 8M10 2l-8 8" stroke="#fff" stroke-width="1.800"/></svg></button>
        </div>
        <div class="navbar">
          <button class="edge" aria-label="Zavřít navigaci"><svg width="9" height="9"><circle cx="4.500" cy="4.500" r="4" fill="#a9a998"/><path d="m3 3 3 3M6 3 3 6" stroke="#eee"/></svg></button>
          <button class="wheel" aria-label="Navigační kolečko 2D"><svg width="24" height="26"><path d="M10 3h7q2.500 0 2.500 2.500V12A9.500 9.500 0 1 1 10 3z" fill="#e4e4dc" stroke="#a0a096" stroke-width="1.500"/><circle cx="10" cy="12" r="4.500" fill="#eee" stroke="#a0a096"/><path d="m7 15.500-3 4M13 15.500l2 4" stroke="#a0a096"/></svg><span>2D</span></button>
          <i></i>
          <button aria-label="Posun"><svg width="16" height="18"><path d="M4.500 12 .8 8.500q1-1.500 3 .5L3 3.500q1.200-1.200 2 .3L6 7.500V2q1-1.500 2 0v5l.8-5q1.200-1.200 2 .3L10.500 8l1.700-4.500q1.500-.8 1.800.8C13 8 14.500 13 11 16.500H7q-2-2-2.500-4.500z" fill="#f2f2ea" stroke="#85857c"/></svg></button>
          <button aria-label="Zoom"><svg width="16" height="18"><circle cx="6" cy="8" r="5" fill="#dfe9f2" stroke="#9a9a92"/><path d="m9 12 3.500 4" stroke="#85857c" stroke-width="2"/><path d="M11.500 4h4M13.500 2v4M11.500 8h4" stroke="#777"/></svg></button>
          <button aria-label="Zoom vše"><svg width="16" height="18"><circle cx="7" cy="7.500" r="6" fill="#dfe9f2" stroke="#9a9a92"/><path d="M4.500 3.500h4l2 2v6h-6z" fill="#fff" stroke="#8c8c84"/><path d="m11 12 4 4.500" stroke="#85857c" stroke-width="2.500"/></svg></button>
          <button aria-label="Zoom okno"><svg width="16" height="18"><circle cx="7" cy="7.500" r="6" fill="#dfe9f2" stroke="#9a9a92"/><path d="M4.500 5h5v5h-5z" fill="#fff" stroke="#8c8c84"/><path d="m11 12 4 4.500" stroke="#85857c" stroke-width="2.500"/></svg></button>
          <button class="edge low" aria-label="Možnosti navigace"><svg width="9" height="9"><circle cx="4.500" cy="4.500" r="3.800" fill="#ddd" stroke="#a9a998"/><path d="M2.500 3.500h4M3 5.500h3" stroke="#999"/></svg></button>
        </div>
      </div>
      <div class="doctabs">
        <button aria-label="Kaskáda"><svg width="16" height="16"><path d="M1 7V1h9v2M4 10V4h9v2M7 7.500h8v7.500H7z" fill="none" stroke="#ccc" stroke-width="1.500"/></svg></button>
        <button aria-label="Mřížka"><svg width="16" height="16"><path d="M1 1.500h5.500v5H1zM9 1.500h5.500v5H9zM1 9.500h5.500v5H1zM9 9.500h5.500v5H9z" fill="none" stroke="#ccc" stroke-width="1.500"/></svg></button>
        <button aria-label="Vodorovně"><svg width="16" height="16"><path d="M1 1.500h14v5H1zM1 9.500h14v5H1z" fill="none" stroke="#ccc" stroke-width="1.500"/></svg></button>
        <button aria-label="Svisle"><svg width="16" height="16"><path d="M1 1h5.500v14H1zM9 1h5.500v14H9z" fill="none" stroke="#ccc" stroke-width="1.500"/></svg></button>
        <button class="up" aria-label="Seznam dokumentů"><svg width="12" height="12"><path d="M1 10h10L6 2z" fill="#eee"/></svg></button>
        <button class="tab">Dispozice.iam</button><button class="tab">Sestava potrubí.iam</button><button class="tab open">Sestava potrubí.idw <svg width="10" height="10"><path d="m1 1 8 8M9 1 1 9" stroke="#444" stroke-width="2.200"/></svg></button>
      </div>
    </main>
  </div>

  <footer class="status"><span class="msg">Připraven</span><span class="cell">715</span><span class="cell">1293</span></footer>
</div>
<div class="behind"><i></i><i></i><i></i><i></i></div>
</div>
</body>
</html>
```
FILE: styles.css
```css
* { box-sizing: border-box; }
body { margin: 0; height: 100vh; display: flex; flex-direction: column; overflow: hidden; font: 11px/15px "Noto Sans", "Open Sans", sans-serif; color: #333; background: #fff; }
button { font: inherit; color: inherit; background: none; border: 0; padding: 0; display: flex; align-items: center; justify-content: center; white-space: nowrap; }
svg { display: block; flex: none; }
ul, p, h2 { margin: 0; padding: 0; list-style: none; }
.defs { position: absolute; width: 0; height: 0; }

.desktop { height: 8px; flex: none; display: flex; overflow: hidden; background: linear-gradient(90deg, #34342c, #44443c 40%, #33423f 70%, #2f4a49); }
.task-mark { width: 15px; height: 2px; margin-left: 171px; background: #e8b070; }
.task-pane { width: 160px; margin-left: 11px; background: #454545; }
.clock { margin: -8px 68px 0 auto; line-height: 11px; color: #fff; font-size: 10px; }

.screen { flex: 1; min-height: 0; display: flex; }
.app { flex: 1; min-width: 0; display: flex; flex-direction: column; background: #f5f5f5; }
.behind { width: 8px; display: flex; flex-direction: column; background: #fff; }
.behind i { height: 71px; background: #6e6e6e; box-shadow: 0 2px 4px #999; }
.behind i:nth-child(1) { height: 34px; background: #aaa; box-shadow: none; }
.behind i:nth-child(2) { height: 37px; background: #2f3337; box-shadow: none; }
.behind i:nth-child(3) { height: 45px; background: #f5f5f5; box-shadow: none; }

.titlebar { height: 22px; flex: none; display: flex; align-items: center; background: #515151; color: #d8d8d8; }
.qat { display: flex; align-items: center; height: 22px; }
.qat button { width: 24px; height: 22px; }
.qat .dd { width: 12px; }
.qat .logo { flex-direction: column; width: 24px; margin-right: 5px; color: #e08a3a; font-size: 7px; line-height: 6px; }
.qat .logo span { margin-top: -2px; }
.qat .dd:last-child { width: 16px; }
.title { flex: 1; display: flex; justify-content: center; gap: 12px; padding-right: 4px; white-space: nowrap; }
.account { display: flex; align-items: center; }
.search { width: 180px; height: 19px; margin: 0 4px; padding: 0 5px; border: 0; background: #949494; color: #fff; font: inherit; }
.search::placeholder { color: #dcdcdc; }
.user { gap: 4px; }
.cart { margin: 0 8px 0 10px; }
.help { gap: 6px; padding-left: 9px; border-left: 1px solid #7a7a7a; }
.winbtns { display: flex; gap: 13px; margin: 0 7px 0 24px; }

.tabs { height: 24px; flex: none; display: flex; align-items: flex-end; background: #515151; color: #ccc; }
.tabs button { height: 20px; padding: 0 10px 2px; margin-right: 1px; }
.tabs .file { width: 55px; margin-right: 3px; padding: 0 0 2px; background: #f08228; color: #fff; }
.tabs .active { background: #f5f5f5; color: #444; }
.tabs .collapse { gap: 3px; padding: 0 20px; }

.ribbon { height: 94px; flex: none; display: flex; background: #f5f5f5; }
.panel { display: flex; flex-direction: column; justify-content: space-between; padding: 2px 2px 3px; border-right: 1px solid #dcdcdc; }
.panel.create { padding-right: 0; }
.panel.last { padding: 2px 5px 3px; border: 0; }
.panel h2 { font-size: 11px; font-weight: 400; text-align: center; line-height: 15px; color: #333; }
.tools { display: flex; justify-content: center; height: 74px; }
.tools button { flex-direction: column; justify-content: flex-start; min-width: 40px; padding: 3px 3px 0; line-height: 15px; }
.create .tools button { padding: 3px 4px 0; }
.tools button > svg:first-child { margin-bottom: 4px; }
.tools .wide { padding: 3px 11px 0; }
.tools .small { display: flex; flex-direction: column; gap: 8px; padding: 4px 7px 0 3px; }
.tools .small button { flex-direction: row; gap: 5px; padding: 0; height: 16px; }
.tools .small button > svg:first-child { margin: 0; }
.small button:disabled { color: #b4b4b4; }
.rule { width: 1px; height: 72px; background: #c6c6c6; margin: 0 4px; }

.work { flex: 1; min-height: 0; display: flex; }
.browser { width: 331px; display: flex; flex-direction: column; border-right: 4px solid #515151; background: #fff; }
.bhead { height: 24px; flex: none; display: flex; background: #5e5e5e; color: #ececec; }
.bhead button { padding: 0 4px; }
.bhead .model { width: 62px; padding: 0; gap: 8px; background: #fff; color: #555; }
.bhead .ilogic { padding: 0 5px 0 4px; }
.grow { flex: 1; }
.treewrap { flex: 1; min-height: 0; display: flex; }
.treeview { flex: 1; min-width: 0; overflow: hidden; padding: 1px 0 0 1px; }
.tree, .tree ul { background: repeating-linear-gradient(#777 0 1px, #fff 1px 3px) 8px 0 / 1px calc(100% - 10px) no-repeat; }
.tree ul { margin-left: 16px; }
.tree ul.skip { background: none; }
.tree p { display: flex; align-items: center; height: 20px; font: 12px/14px "DejaVu Sans Condensed", "Noto Sans", sans-serif; color: #000; white-space: nowrap; }
.tree p svg { width: 16px; height: 16px; margin-right: 2px; }
.tree p svg:first-child { background: #fff; height: 10px; }
.tree p span { padding: 2px 1px 0; }
.tree .picked span { background: #0078d7; color: #fff; outline: 1px solid #e00020; outline-offset: -1px; }
.tree .current, .tree .current svg:first-child { background: #bfbfbf; }
.vbar { width: 18px; padding-right: 1px; display: flex; flex-direction: column; background: #f0f0f0; }
.vbar .track { flex: 234; }
.vbar .thumb { flex: 565; background: #cdcdcd; }
.hbar { display: flex; height: 18px; flex: none; padding-left: 1px; background: #f0f0f0; }
.hbar .thumb { flex: 225; background: #cdcdcd; }
.hbar .track { flex: 49; }
.hbar .corner { width: 18px; }

.doc { flex: 1; min-width: 0; display: flex; flex-direction: column; }
.canvas { flex: 1; min-height: 0; position: relative; background: #ececd5; overflow: hidden; }
.drawing { width: 100%; height: 100%; }
.mdi { position: absolute; top: 6px; right: 1px; display: flex; gap: 8px; }
.navbar { position: absolute; top: 24px; right: 0; width: 36px; height: 170px; padding: 2px 3px; display: flex; flex-direction: column; align-items: center; gap: 6px; border: 2px solid #b5b5a2; border-radius: 6px; background: #e7e7d8; }
.navbar .edge { align-self: flex-end; }
.navbar .wheel { position: relative; margin-top: 2px; }
.navbar .wheel span { position: absolute; right: -3px; bottom: -1px; color: #7d9bb5; font-weight: 700; font-size: 9px; line-height: 10px; }
.navbar i { width: 26px; height: 1px; background: #b5b5a2; flex: none; }
.doctabs { height: 24px; flex: none; display: flex; background: #5e5e5e; color: #c8c8c8; }
.doctabs button { width: 24px; }
.doctabs .tab { width: auto; padding: 0 10px; }
.doctabs .up { border-right: 1px solid #888; }
.doctabs .open { margin-left: 2px; padding: 0 11px 0 8px; gap: 8px; background: #f5f5f5; color: #444; }

.status { height: 24px; flex: none; display: flex; align-items: center; background: #f5f5f5; color: #000; }
.msg { flex: 1; padding-left: 1px; }
.cell { padding: 0 7px 0 9px; border-left: 1px solid #d5d5d5; line-height: 24px; }
.cell:last-child { border-right: 1px solid #d5d5d5; }
```
